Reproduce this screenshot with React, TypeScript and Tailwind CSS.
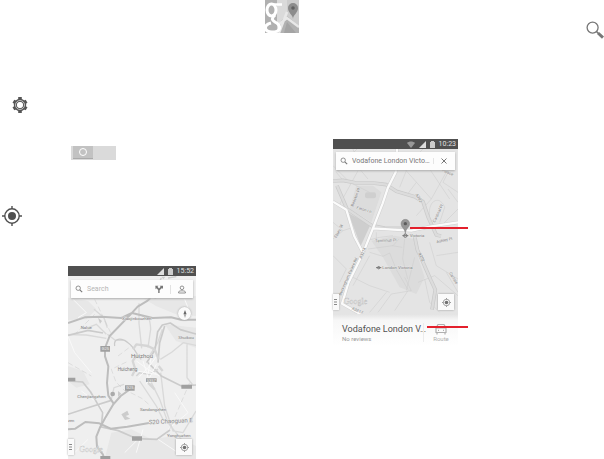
import React from "react";

type Label = { x: number; y: number; size: number; text: string; rotate?: number; fill?: string };

function Labels({ items }: { items: Label[] }) {
  return (
    <g fontFamily="Roboto, sans-serif">
      {items.map((l) => (
        <text
          key={l.text + l.x}
          x={l.x}
          y={l.y}
          fontSize={l.size}
          fill={l.fill ?? "#7c7c7c"}
          stroke="#ececec"
          strokeWidth="2"
          paintOrder="stroke"
          transform={l.rotate ? `rotate(${l.rotate} ${l.x} ${l.y})` : undefined}
        >
          {l.text}
        </text>
      ))}
    </g>
  );
}

function Locate({ className }: { className: string }) {
  return (
    <svg viewBox="0 0 20 20" className={className} fill="none" stroke="currentColor" aria-hidden="true">
      <circle cx="10" cy="10" r="7.2" strokeWidth="1.4" />
      <circle cx="10" cy="10" r="4" fill="currentColor" stroke="none" />
      <path d="M10 0v3M10 17v3M0 10h3M17 10h3" strokeWidth="1.4" />
    </svg>
  );
}

function Magnifier({ className }: { className: string }) {
  return (
    <svg viewBox="0 0 12 12" className={className} fill="none" stroke="currentColor" aria-hidden="true">
      <circle cx="4.8" cy="4.8" r="3.3" strokeWidth="1.2" />
      <path d="M7.2 7.2l3.6 3.6" strokeWidth="1.6" />
    </svg>
  );
}

function SearchGlyph() {
  return (
    <svg viewBox="0 0 18 18" className="h-[18px] w-[18px]" fill="none" stroke="currentColor" role="img" aria-label="Search">
      <circle cx="6.6" cy="6.6" r="5.5" strokeWidth="1.3" />
      <path d="M10.600 10.600l1.600 1.600" strokeWidth="1.5" />
      <path d="M12 12l5 4.600" strokeWidth="3" />
    </svg>
  );
}

function MapsLogo() {
  return (
    <svg viewBox="0 0 34 33" className="h-[33px] w-[34px]" role="img" aria-label="Google Maps">
      <path fill="#c2c2c2" d="M0 0h34v33H0z" />
      <path fill="#b0b0b0" d="M0 0h12v33H0z" />
      <path fill="#dadada" d="M12 0h10v33H12z" />
      <path fill="#cdcdcd" d="M22 0h12v33H22z" />
      <path fill="#b2b2b2" d="M16 21l6-5 12 10v7H13z" />
      <path fill="#a4a4a4" d="M22 22l9 11H19z" />
      <path d="M13 25l9-7 12 9M22 12l-8 21" stroke="#e8e8e8" strokeWidth="2.500" fill="none" />
      <g fill="none" stroke="#fff">
        <ellipse cx="6.500" cy="10" rx="4.500" ry="6" strokeWidth="3" />
        <path d="M8 4.500h9" strokeWidth="2.500" />
        <path d="M10 15c-4 4-3 5 0 7 7 4 6 10-3 10-8 0-9-7-1-9" strokeWidth="3" />
      </g>
      <path fill="#8c8c8c" d="M28 19c0-4-5-6-5-11a5 5 0 0 1 10 0c0 5-5 7-5 11z" />
      <circle cx="28" cy="8" r="1.800" fill="#606060" />
    </svg>
  );
}

function Gear() {
  return (
    <svg viewBox="0 0 16 16" className="h-4 w-4 text-[#555]" fill="none" stroke="currentColor" role="img" aria-label="Settings">
      <path d="M8 0v3.500M8 12.500V16M1.400 4.200l3 1.700M11.600 10.100l3 1.700M1.400 11.800l3-1.700M11.600 5.900l3-1.700" strokeWidth="3.600" />
      <circle cx="8" cy="8" r="4.600" strokeWidth="3.200" />
      <circle cx="8" cy="8" r="4.500" strokeWidth=".8" stroke="#ddd" />
      <circle cx="8" cy="8" r="2.700" fill="#fff" stroke="none" />
    </svg>
  );
}

function Signal() {
  return (
    <svg viewBox="0 0 7 7" className="h-[7px] w-[7px]" aria-hidden="true">
      <path d="M7 0v7H0z" fill="#ddd" />
    </svg>
  );
}

function Battery() {
  return (
    <svg viewBox="0 0 5 7" className="h-[7px] w-[5px]" aria-hidden="true">
      <path d="M1 0h3v1h1v6H0V1h1z" fill="#ccc" />
    </svg>
  );
}

function RegionMap() {
  return (
    <svg viewBox="0 30 384 549" className="block w-full" role="img" aria-label="Map of Huizhou">
      <path fill="#efefef" d="M0 30h384v549H0z" />
      <g fill="#e7e7e7">
        <path d="M0 95l60 10 25 25-30 30-55 2zM215 90h169v60l-60-5-60-25zM290 175l94 10v60l-60-20zM130 500l60-10 60 30 70-10 64 30v39H110zM0 300l45 15 20 40-40 10-25-20z" />
      </g>
      <g fill="none" stroke="#f9f9f9" strokeWidth="3">
        <path d="M15 100l40 40-25 15M40 375l55 40 20 45M205 560l20-70M330 560l-60-40M300 490l60-50-40-60M0 210l20 50 50 60M60 520l-40 40M170 560l40-40M350 100l20 50" />
      </g>
      <g fill="none" stroke="#d9d9d9" strokeWidth="4">
        <path d="M213 112v60l8 75M222 150c18 4 24 0 26 40l-8 55M60 185l25-10 30 30M118 205l24 18 30 0M283 190l-14 40-25 40M384 238l-38-8-34 28-35 22M357 235v100l20 25M0 206l55 1 60 10" />
        <path d="M78 130l30 25 10 30M130 400l8-35 30-10M215 345l50 75 20 40M250 350l25 50 25 70 40 50M278 320l12 100 25 75 30 5M345 500l39-65" />
      </g>
      <g fill="none" stroke="#cbcbcb" strokeWidth="5">
        <path d="M100 480l4-40-36-62-24-30-44-3M0 208l60-15 45 8M240 290l40 40 60 30 44-3M270 290l5-60 15-50M96 482l55 12 55 24 60 2 40-28M0 445l60-20 70-22" />
        <path d="M140 240c-5-24 20-26 40-10 25 18 25 40 40 50M255 95l25-60M265 97l-30-10M300 36l25-4" strokeWidth="4" />
      </g>
      <g fill="none" stroke="#cacaca" strokeWidth="1.500" strokeDasharray="16 8">
        <path d="M175 288l-45 22 14 38 30 30M188 380l35 18 25 22M80 100l48 100M0 290l70 40M80 145l-60 60M365 350l-60 140M150 270l40-30" />
      </g>
      <g fill="none" stroke="#bdbdbd" strokeWidth="6" strokeLinejoin="round">
        <path d="M0 171l50-17 50-2 60 4 32-15 62 15 55-2 30 7 45 0M247 96l-8 8-30 18-24 26-60 62-14 36 0 25 10 30-4 50 4 38 16 24" />
        <path d="M200 360l-42 30-22 25-25 42-14 25-12 30 2 30 18 24 4 14" />
        <path d="M0 490l22-2 30-20 42 4 34 16 50-6 65-11" />
        <path d="M236 290l25-38 8-55 14-20 24-6 30 20 47 13" strokeWidth="5" stroke="#cacaca" />
      </g>
      <g fill="none" stroke="#d6d6d6" strokeWidth="7" strokeLinejoin="bevel">
        <path d="M195 250l10-15 35 5 20 10 12 30M192 330l10-20-8-25 14-20M240 350l20 20M272 300l12 15" />
        <path d="M205 330l10-10 30 5 25-15" strokeWidth="5" />
      </g>
      <g stroke="#fafafa" strokeWidth="3" fill="none">
        <path d="M205 285l35 25 35 20M212 335l30-32 22-30M225 285l20 65M265 295l-30 60M205 315l60 10M250 270l-10 55" />
      </g>
      <path d="M280 32h12l-6 8zM160 445l18-11 5 12-10 4 14 8-16 4zM90 155l12 10-6 8zM150 375l10 8-10 10z" fill="#ccc" />
      <circle cx="134" cy="384" r="7" fill="#aaa" />
      <g fill="#a0a0a0">
        <path d="M97 240h29v17H97zM0 335h22v11H0zM171 358h29v16h-29zM234 337h32v11h-32zM340 356h32v12h-32zM192 511h30v13h-30zM97 570h30v9H97z" />
      </g>
      <Labels
        items={[
          { x: 162, y: 163, size: 13, text: "Xiaojinkouzhen" },
          { x: 38, y: 189, size: 13, text: "Nalue" },
          { x: 331, y: 220, size: 13, text: "Shuikou" },
          { x: 189, y: 275, size: 18, text: "Huizhou" },
          { x: 149, y: 315, size: 14, text: "Huicheng" },
          { x: 28, y: 395, size: 13, text: "Chenjiangzhen" },
          { x: 216, y: 436, size: 13, text: "Sandongzhen" },
          { x: 243, y: 475, size: 18, text: "S20 Chaoguan E", rotate: -3, fill: "#8c8c8c" },
          { x: 0, y: 468, size: 12, text: "zen" },
          { x: 297, y: 514, size: 13, text: "Yonghuzhen" },
        ]}
      />
      <g fontFamily="Roboto, sans-serif" fontSize="12" fill="#f2f2f2">
        <text x="101" y="253">G25</text>
        <text x="175" y="370">G25</text>
        <text x="236" y="347">S357</text>
      </g>
      <text x="34" y="558" fontFamily="Liberation Serif, serif" fontSize="24" fill="#fafafa" stroke="#c2c2c2" strokeWidth="1">Google</text>
    </svg>
  );
}

const majorRoads = "M0 126l30-2 40 8 50 0 40 5 30 20 55 16 25 15 15 45 25 55 14 3M12 140l30 70 75 50 40 8 60 0M245 292l8 40 18 40 22 50 14 30-10 60";
const mainRoad = "M192 30l-4 70-24 48-15 45-28 72-30 75-45 92-15 50-4 12 60 34 20 10M120 268l60 4 55 3 60-13 80-12M90 342l-26-50-24-80-40-24";

function StreetMap() {
  return (
    <svg viewBox="0 30 375 495" className="block w-full" role="img" aria-label="Map around London Victoria">
      <path fill="#e4e4e4" d="M0 30h375v495H0z" />
      <path fill="#cecece" d="M46 222l66 36-29 63z" />
      <path fill="#dcdcdc" d="M115 305l70-15 60 10 10 55 20 60-25 50-50-20-50-90zM70 140l50 0 25 20-30 90-65-40z" />
      <rect x="96" y="160" width="33" height="18" rx="6" fill="#cfcfcf" />
      <g fill="none" stroke="#cbcbcb" strokeWidth="1.500">
        <path d="M12 90l60-60M0 80l45 45M10 100l25 30M60 30l20 60 25 30M75 95l-60 110M50 130l60 30M200 145l30-75 40-40M215 90l80 90 50-90M250 130l-30 40M295 180l-45 50M320 40l-30 50 60 90M290 235c-8-50 30-70 45-30l-15 45M345 150l30 40M350 90l-20 40 45 30M375 210l-55 55" />
        <path d="M180 290l-40 5-40 10M105 330l75-10 18-20M110 340l40 12 20-10 20 50 35 60M215 300l-6 60 15 60M245 355l-25 100M178 320l30 5M50 410l60 30 60 20M110 350l-50 90M225 455l-40 60M215 415l20 40-60 10-40 55M255 430l50-20 70 60M275 420l15 70 30 30M290 310l20 70 65 40M310 350l65-10M340 400l35 60M0 350l40 40-20 40M0 250l30 25 30-10M0 300l30-25M130 280l0 30M160 460l-50 60" />
      </g>
      <g fill="none" strokeLinejoin="round">
        <path d={majorRoads} stroke="#c9c9c9" strokeWidth="11" />
        <path d={majorRoads} stroke="#dcdcdc" strokeWidth="7" />
        <path d={mainRoad} stroke="#cfcfcf" strokeWidth="10" />
        <path d={mainRoad} stroke="#fbfbfb" strokeWidth="7" />
      </g>
      <Labels
        items={[
          { x: 61, y: 203, size: 12, text: "Beeston Pl", rotate: -69 },
          { x: 70, y: 209, size: 12, text: "Eaton Ln", rotate: 17 },
          { x: 10, y: 298, size: 12, text: "Ebury St", rotate: -62 },
          { x: 306, y: 251, size: 12, text: "Cardinal Pl", rotate: -64 },
          { x: 326, y: 96, size: 12, text: "Palace", rotate: 24 },
          { x: 247, y: 167, size: 12, text: "A302", rotate: 58 },
          { x: 256, y: 344, size: 12, text: "A202", rotate: 65 },
          { x: 127, y: 310, size: 12, text: "Terminus Pl", rotate: -3 },
          { x: 311, y: 313, size: 12, text: "Ashley Pl", rotate: -13 },
          { x: 230, y: 294, size: 13, text: "Victoria" },
          { x: 148, y: 390, size: 13, text: "London Victoria" },
          { x: 24, y: 470, size: 12, text: "Buckingham Palace Rd", rotate: -66 },
          { x: 86, y: 360, size: 12, text: "A3214", rotate: -67 },
          { x: 56, y: 511, size: 12, text: "A3217", rotate: 24 },
          { x: 348, y: 402, size: 12, text: "Carlisle", rotate: 59 },
        ]}
      />
      <g fill="none" stroke="#777" strokeWidth="3">
        <circle cx="137" cy="386" r="3.500" />
        <path d="M129 386h16" />
        <circle cx="217" cy="290" r="5" />
        <path d="M208 290h18" />
      </g>
      <path fill="#969696" stroke="#777" d="M217 286c0-18-13-20-13-32a13 13 0 0 1 26 0c0 12-13 14-13 32z" />
      <circle cx="217" cy="254" r="5" fill="#5c5c5c" />
      <text x="32" y="495" fontFamily="Liberation Serif, serif" fontSize="24" fill="#f4f4f4" stroke="#b8b8b8" strokeWidth="1">Google</text>
    </svg>
  );
}

function StatusBar({ time, wifi }: { time: string; wifi?: boolean }) {
  return (
    <div className="flex h-[10px] items-center justify-end gap-1 bg-[#505050] pr-[2px] text-[7px] leading-[10px] text-[#e0e0e0]">
      {wifi && (
        <svg viewBox="0 0 8 7" className="h-[7px] w-2" aria-hidden="true">
          <path d="M0 2c2-2 6-2 8 0L4 7z" fill="#999" />
        </svg>
      )}
      <Signal />
      <Battery />
      <span>{time}</span>
    </div>
  );
}

function LocateButton() {
  return (
    <button aria-label="My location" className="absolute right-1 bottom-1 grid h-4 w-4 place-items-center bg-[#fafafa] text-[#707070] shadow-[0_0_2px_#999]">
      <Locate className="h-[9px] w-[9px]" />
    </button>
  );
}

function MenuButton() {
  return (
    <button aria-label="Menu" className="absolute bottom-1 left-0 grid h-4 w-[6px] place-items-center bg-[#fafafa] text-[#888] shadow-[0_0_2px_#999]">
      <svg viewBox="0 0 4 6" className="h-[6px] w-1" stroke="currentColor" aria-hidden="true">
        <path d="M0 .5h3M0 3h3M0 5.500h3" />
      </svg>
    </button>
  );
}

function HuizhouPhone() {
  return (
    <section aria-label="Map search" className="w-[128px]">
      <StatusBar time="15:52" />
      <div className="relative">
        <RegionMap />
        <div className="absolute inset-x-[3px] top-1 flex h-[18px] items-center bg-[#fdfdfd] px-1 text-[#777] shadow-[0_1px_2px_#aaa]">
          <Magnifier className="h-2 w-2 shrink-0" />
          <input aria-label="Search" placeholder="Search" className="ml-1 min-w-0 flex-1 text-[7px] outline-none placeholder:text-[#b5b5b5]" />
          <button aria-label="Directions" className="mr-[7px]">
            <svg viewBox="0 0 8 8" className="h-2 w-2" fill="currentColor">
              <path d="M3.200 8V5L1.500 3.300.6 4.200.3.800h3.200l-1 1L4 3.400l1.600-1.600-1-1H8v3.200l-1-1L4.600 5.300V8z" />
            </svg>
          </button>
          <button aria-label="Account" className="border-l border-[#e2e2e2] pr-[3px] pl-[7px]">
            <svg viewBox="0 0 8 9" className="h-[9px] w-2" fill="none" stroke="currentColor" strokeWidth=".8">
              <circle cx="4" cy="2.800" r="1.800" />
              <path d="M.6 8V7c0-1.600 6.800-1.600 6.800 0v1z" />
            </svg>
          </button>
        </div>
        <button aria-label="Compass" className="absolute top-[31px] right-[5px] grid h-[13px] w-[13px] place-items-center rounded-full bg-[#fafafa] shadow-[0_0_2px_#999]">
          <svg viewBox="0 0 4 8" className="h-2 w-1" aria-hidden="true">
            <path d="M2 0l1.500 4h-3z" fill="#666" />
            <path d="M2 8l1.500-4h-3z" fill="#aaa" />
          </svg>
        </button>
        <MenuButton />
        <LocateButton />
      </div>
    </section>
  );
}

function LondonPhone() {
  return (
    <section aria-label="Search result" className="relative w-[125px]">
      <StatusBar time="10:23" wifi />
      <div className="relative">
        <StreetMap />
        <div className="absolute inset-x-[3px] top-[3px] flex h-[18px] items-center bg-[#fdfdfd] px-1 text-[#777] shadow-[0_1px_2px_#aaa]">
          <Magnifier className="h-2 w-2 shrink-0" />
          <input aria-label="Search" defaultValue="Vodafone London Victo…" className="ml-1 min-w-0 flex-1 text-[7px] text-[#777] outline-none" />
          <button aria-label="Clear" className="border-l border-[#e5e5e5] pr-1 pl-[7px]">
            <svg viewBox="0 0 6 6" className="h-[6px] w-[6px]" stroke="currentColor">
              <path d="M.5 .5l5 5M5.500 .5l-5 5" />
            </svg>
          </button>
        </div>
        <MenuButton />
        <LocateButton />
      </div>
      <div className="flex bg-linear-to-b from-[#e3e3e3] via-[#f7f7f7] via-20% to-white pt-[9px] pb-1">
        <div className="w-[90px] pl-[9px]">
          <h2 className="text-[9px] leading-3 font-normal whitespace-nowrap text-[#505050]">Vodafone London V…</h2>
          <p className="text-[6px] leading-[7px] text-[#999]">No reviews</p>
        </div>
        <button className="flex flex-1 flex-col items-center border-l border-[#ececec] text-[6px] leading-[7px] text-[#b0b0b0]">
          <svg viewBox="0 0 12 12" className="h-3 w-3" fill="none" stroke="currentColor" strokeWidth="1.200" aria-hidden="true">
            <path d="M1 9.500V5l2-3.500h6L11 5v4.500zM1 5h10M2 9v2.500M10 9v2.500M3 7.300h1M8 7.300h1" />
          </svg>
          Route
        </button>
      </div>
      <i className="absolute top-[88px] left-[77px] h-[2px] w-[58px] bg-[#e3202c]" />
      <i className="absolute top-[187px] left-[94px] h-[2px] w-[41px] bg-[#e3202c]" />
    </section>
  );
}

export default function App() {
  return (
    <main className="grid grid-cols-[333fr_271fr] overflow-hidden bg-white font-[Roboto,sans-serif]">
      <div className="flex flex-col items-start">
        <div className="self-end pr-[34px]">
          <MapsLogo />
        </div>
        <div className="mt-16 ml-3">
          <Gear />
        </div>
        <button role="switch" aria-checked="false" aria-label="Location access" className="mt-[33px] ml-[71px] flex h-[14px] w-[45px] bg-[#dadada]">
          <span className="ml-[2px] grid h-[13px] w-5 place-items-center border-b border-[#aaa] bg-[#c2c2c2]">
            <span className="h-2 w-2 rounded-full border border-white" />
          </span>
        </button>
        <div className="mt-[46px] ml-[2px] text-[#505050]">
          <Locate className="h-5 w-5" />
        </div>
        <div className="mt-10 ml-[68px]">
          <HuizhouPhone />
        </div>
      </div>
      <div className="flex flex-col items-start">
        <div className="mt-[21px] self-end text-[#777]">
          <SearchGlyph />
        </div>
        <div className="mt-[100px]">
          <LondonPhone />
        </div>
      </div>
    </main>
  );
}
